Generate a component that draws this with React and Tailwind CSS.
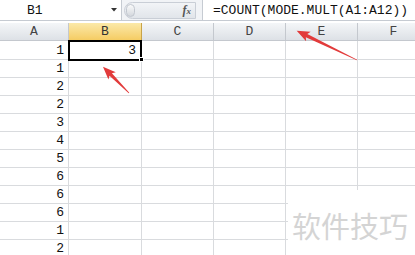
import React from 'react'

const COLS = ['A', 'B', 'C', 'D', 'E', 'F']
const VALUES = [1, 1, 2, 2, 3, 4, 5, 6, 6, 6, 1, 2]

// tapered arrow drawn along +x, then rotated into place
function Arrow({ x, y, angle, len }) {
  const L = len
  const pts = `0,-0.4 ${L - 11},-1.7 ${L - 13},-5.2 ${L},0 ${L - 13},5.2 ${L - 11},1.7 0,0.4`
  return (
    <g transform={`translate(${x} ${y}) rotate(${angle})`}>
      <polygon points={pts} fill="#e23b3b" />
    </g>
  )
}

function HeaderCell({ label, active }) {
  return (
    <div
      className={
        'h-[18px] flex items-center justify-center border-r border-b text-[13px] leading-none ' +
        (active
          ? 'bg-gradient-to-b from-[#fbe9a8] to-[#f5cc62] border-[#c8a348] text-[#333]'
          : 'bg-gradient-to-b from-[#f4f6f8] to-[#dde1e6] border-[#c4c8ce] text-[#444]')
      }
    >
      {label}
    </div>
  )
}

export default function App() {
  return (
    <div className="relative w-[415px] h-[255px] overflow-hidden bg-white font-['Liberation_Mono',monospace] text-[#111]">
      {/* name box + formula bar */}
      <div className="flex h-[21px] bg-[#f1f3f6] border-b border-[#c6cbd2]">
        <div className="w-[122px] flex items-center bg-white border-r border-[#c6cbd2]">
          <span className="pl-[27px] text-[13px] leading-none">B1</span>
          <svg className="ml-auto mr-[4px]" width="6" height="4" viewBox="0 0 6 4">
            <polygon points="0,0 6,0 3,3.5" fill="#333" />
          </svg>
        </div>
        <div className="w-[80px] flex items-center pl-[2px] pr-[6px]">
          <div className="flex-1 h-[17px] flex items-center rounded-l-full bg-gradient-to-b from-[#f2f4f7] to-[#e1e5ea] border border-[#c9ced6]">
            <div className="w-[9px] h-[13px] ml-[1px] rounded-full bg-gradient-to-b from-[#fafafa] to-[#d4d8de] border border-[#c2c7cf]" />
            <span className="ml-auto mr-[4px] font-['Liberation_Serif',serif] italic font-bold text-[12px] text-[#555] leading-none">
              f<span className="text-[9px]">x</span>
            </span>
          </div>
        </div>
        <div className="flex-1 flex items-center bg-white border-l border-[#c6cbd2] pl-[10px]">
          <span className="text-[13px] leading-none whitespace-nowrap">=COUNT(MODE.MULT(A1:A12))</span>
        </div>
      </div>

      <div className="h-[2px] bg-white" />

      {/* column headers */}
      <div className="grid grid-cols-[69px_73px_72px_72px_72px_72px]">
        {COLS.map((c) => (
          <HeaderCell key={c} label={c} active={c === 'B'} />
        ))}
      </div>

      {/* rows */}
      {VALUES.map((v, i) => (
        <div
          key={i}
          className={
            'grid grid-cols-[69px_73px_72px_72px_72px_72px] ' + (i === 0 ? 'h-[19px]' : 'h-[18px]')
          }
        >
          <div className="flex items-center justify-end pr-[4px] border-r border-b border-[#d9dbde] text-[13px] leading-none">
            {v}
          </div>
          <div className="flex items-center justify-end pr-[5px] border-r border-b border-[#d9dbde] text-[13px] leading-none">
            {i === 0 ? '3' : ''}
          </div>
          <div className="border-r border-b border-[#d9dbde]" />
          <div className="border-r border-b border-[#d9dbde]" />
          <div className="border-r border-b border-[#d9dbde]" />
          <div className="border-r border-b border-[#d9dbde]" />
        </div>
      ))}

      {/* active cell B1 */}
      <div className="absolute left-[68px] top-[40px] w-[74px] h-[21px] border-2 border-black" />
      <div className="absolute left-[139px] top-[57px] w-[5px] h-[5px] bg-black border border-white" />

      {/* watermark */}
      <div className="absolute left-[288px] top-[190px] w-[130px] h-[70px] bg-white flex items-center pl-[4px]">
        <span className="font-['Noto_Sans_CJK_SC',sans-serif] text-[29px] leading-none text-[#d4d4d4] tracking-[0px]">
          软件技巧
        </span>
      </div>

      <svg className="absolute inset-0 pointer-events-none" width="415" height="255">
        <Arrow x={129} y={93} angle={-134.7} len={37} />
        <Arrow x={357} y={60} angle={-154.2} len={67} />
      </svg>
    </div>
  )
}
